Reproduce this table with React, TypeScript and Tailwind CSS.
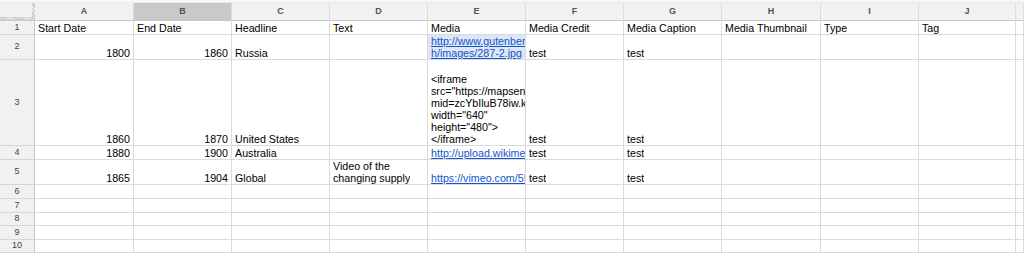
import React from "react";

type Cell = {
  t?: string;
  lines?: string[];
  right?: boolean;
  link?: boolean;
  sel?: boolean;
};

const COLS = ["A", "B", "C", "D", "E", "F", "G", "H", "I", "J", ""];
const WIDTHS = [
  "w-[99px]",
  "w-[98px]",
  "w-[98px]",
  "w-[98px]",
  "w-[98px]",
  "w-[98px]",
  "w-[98px]",
  "w-[99px]",
  "w-[98px]",
  "w-[97px]",
  "w-[8px]",
];

const ROWS: { h: string; cells: Cell[] }[] = [
  {
    h: "h-[14px]",
    cells: [
      { t: "Start Date" },
      { t: "End Date" },
      { t: "Headline" },
      { t: "Text" },
      { t: "Media" },
      { t: "Media Credit" },
      { t: "Media Caption" },
      { t: "Media Thumbnail" },
      { t: "Type" },
      { t: "Tag" },
    ],
  },
  {
    h: "h-[25px]",
    cells: [
      { t: "1800", right: true },
      { t: "1860", right: true },
      { t: "Russia" },
      {},
      { lines: ["http://www.gutenberg.org", "h/images/287-2.jpg"], link: true, sel: true },
      { t: "test" },
      { t: "test" },
    ],
  },
  {
    h: "h-[86px]",
    cells: [
      { t: "1860", right: true },
      { t: "1870", right: true },
      { t: "United States" },
      {},
      {
        lines: [
          "<iframe",
          'src="https://mapsengine.google.com',
          "mid=zcYbIluB78iw.kXXXXX",
          'width="640"',
          'height="480">',
          "</iframe>",
        ],
      },
      { t: "test" },
      { t: "test" },
    ],
  },
  {
    h: "h-[14px]",
    cells: [
      { t: "1880", right: true },
      { t: "1900", right: true },
      { t: "Australia" },
      {},
      { t: "http://upload.wikimedia.org/wikipedia", link: true },
      { t: "test" },
      { t: "test" },
    ],
  },
  {
    h: "h-[25px]",
    cells: [
      { t: "1865", right: true },
      { t: "1904", right: true },
      { t: "Global" },
      { lines: ["Video of the", "changing supply"] },
      { t: "https://vimeo.com/55555555", link: true },
      { t: "test" },
      { t: "test" },
    ],
  },
  { h: "h-[14px]", cells: [] },
  { h: "h-[14px]", cells: [] },
  { h: "h-[13px]", cells: [] },
  { h: "h-[14px]", cells: [] },
  { h: "h-[13px]", cells: [] },
];

function CellView({ c, w }: { c: Cell; w: string }) {
  const color = c.link ? "text-[#1155cc] underline" : "text-black";
  const line = "max-w-full overflow-hidden whitespace-nowrap leading-[12px]";
  return (
    <div
      className={`${w} shrink-0 h-full flex flex-col justify-end overflow-hidden border-r border-b border-[#dadada] ${
        c.sel ? "bg-[#dfe7f6]" : "bg-white"
      } ${c.right ? "items-end pr-[3px]" : "items-start pl-[3px]"} ${color}`}
    >
      {c.lines
        ? c.lines.map((l, i) => (
            <div key={i} className={line}>
              {l}
            </div>
          ))
        : c.t
        ? <div className={line}>{c.t}</div>
        : null}
    </div>
  );
}

export default function App() {
  return (
    <div
      className="w-[1024px] h-[256px] overflow-hidden bg-white text-[10.7px]"
      style={{ fontFamily: '"Liberation Sans", Arial, sans-serif' }}
    >
      {/* top strip */}
      <div className="h-[3px] bg-[#f7f7f7] border-b border-[#ececec]" />
      {/* column header */}
      <div className="flex h-[18px]">
        <div className="w-[35px] shrink-0 h-full bg-[#f1f1f1] border-b border-[#c8c8c8] relative">
          <div className="absolute right-0 top-0 bottom-0 w-[3px] bg-[repeating-linear-gradient(45deg,#c4c4c4_0px,#c4c4c4_1px,#ececec_1px,#ececec_2px)]" />
          <div className="absolute left-0 right-0 bottom-0 h-[3px] bg-[repeating-linear-gradient(45deg,#c4c4c4_0px,#c4c4c4_1px,#ececec_1px,#ececec_2px)]" />
        </div>
        {COLS.map((c, i) => (
          <div
            key={i}
            className={`${WIDTHS[i]} shrink-0 h-full flex items-center justify-center border-r border-b border-r-[#dcdcdc] border-b-[#c8c8c8] text-[9px] font-bold text-[#555] ${
              c === "B" ? "bg-[#c9c9c9]" : "bg-[#f1f1f1]"
            }`}
          >
            {c}
          </div>
        ))}
      </div>
      {ROWS.map((r, ri) => (
        <div key={ri} className={`flex ${r.h}`}>
          <div className="w-[35px] shrink-0 h-full flex items-center justify-center bg-[#f1f1f1] border-r border-b border-r-[#c8c8c8] border-b-[#d6d6d6] text-[9px] text-[#444]">
            {ri + 1}
          </div>
          {COLS.map((_, ci) => (
            <CellView key={ci} w={WIDTHS[ci]} c={r.cells[ci] || {}} />
          ))}
        </div>
      ))}
    </div>
  );
}
